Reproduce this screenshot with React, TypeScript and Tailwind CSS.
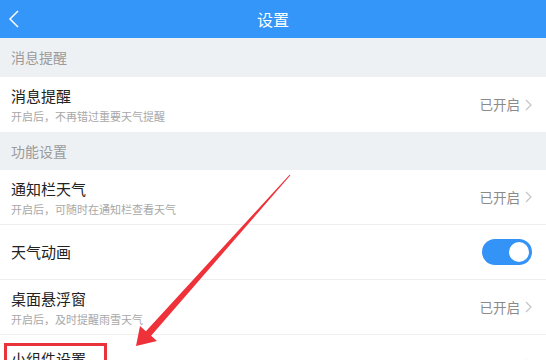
const font = { fontFamily: '"Noto Sans CJK SC", "Noto Sans", sans-serif' };

type Row = {
  title: string;
  sub?: string;
  status?: string;
  toggle?: boolean;
};

const SectionHeader = ({ label, tall }: { label: string; tall?: boolean }) => (
  <div
    className={`flex items-center bg-[#eef1f4] px-[11px] text-[14px] text-[#9a9a9a] ${
      tall ? "h-[39px]" : "h-[38px]"
    }`}
  >
    {label}
  </div>
);

const Chevron = () => (
  <svg width="7" height="12" viewBox="0 0 7 12" className="ml-[5px]">
    <path d="M1 1l5 5-5 5" fill="none" stroke="#c4c4c4" strokeWidth="1.2" />
  </svg>
);

const Toggle = () => (
  <div className="flex h-[26px] w-[50px] items-center justify-end rounded-full bg-[#3493f7] p-[1px]">
    <div className="h-[24px] w-[24px] rounded-full border-2 border-[#3493f7] bg-white" />
  </div>
);

const SettingRow = ({ row, last }: { row: Row; last?: boolean }) => (
  <div
    className={`flex h-[55px] items-center justify-between bg-white pl-[11px] pr-[14px] ${
      last ? "" : "border-b border-[#eeeeee]"
    }`}
  >
    <div className="flex flex-col">
      <span className="text-[15px] leading-[20px] text-[#222]">{row.title}</span>
      {row.sub && (
        <span className="mt-[3px] text-[11px] leading-[14px] text-[#a8a8a8]">{row.sub}</span>
      )}
    </div>
    {row.toggle ? (
      <Toggle />
    ) : (
      <div className="flex items-center text-[13.5px] text-[#8a8a8a]">
        {row.status}
        <Chevron />
      </div>
    )}
  </div>
);

const featureRows: Row[] = [
  { title: "通知栏天气", sub: "开启后，可随时在通知栏查看天气", status: "已开启" },
  { title: "天气动画", toggle: true },
  { title: "桌面悬浮窗", sub: "开启后，及时提醒雨雪天气", status: "已开启" },
];

const App = () => {
  return (
    <div className="relative h-[360px] w-[546px] overflow-hidden bg-white" style={font}>
      <div className="relative flex h-[38px] items-center justify-center bg-[#3396f8]">
        <svg width="12" height="18" viewBox="0 0 12 18" className="absolute left-[8px] top-[10px]">
          <path d="M10 1L2 9l8 8" fill="none" stroke="#fff" strokeWidth="1.5" />
        </svg>
        <span className="text-[16px] text-white">设置</span>
      </div>

      <SectionHeader label="消息提醒" tall />
      <SettingRow row={{ title: "消息提醒", sub: "开启后，不再错过重要天气提醒", status: "已开启" }} last />

      <SectionHeader label="功能设置" />
      {featureRows.map((row) => (
        <SettingRow key={row.title} row={row} />
      ))}
      <div className="flex h-[55px] items-start justify-between bg-white pl-[11px] pr-[14px] pt-[14px]">
        <span className="text-[15px] leading-[20px] text-[#222]">小组件设置</span>
        <div className="mt-[10px]">
          <Chevron />
        </div>
      </div>

      {/* annotation overlay */}
      <div className="absolute left-[4px] top-[343px] h-[30px] w-[103px] border-[3px] border-[#e8333a]" />
      <svg width="546" height="360" className="pointer-events-none absolute left-0 top-0">
        <polygon
          points="290.4,175.3 151.1,335.8 157,341 136,346 140,326 145.9,331.2 289.6,174.7"
          fill="#ef3139"
        />
      </svg>
    </div>
  );
};

export default App;
